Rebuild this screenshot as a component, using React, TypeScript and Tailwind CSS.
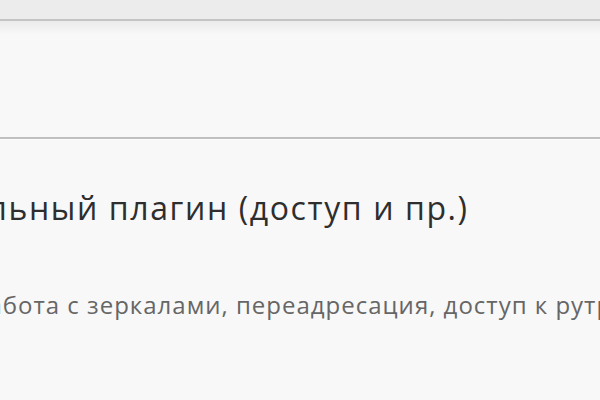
export default function App() {
  return (
    <div className="w-[600px] h-[400px] overflow-hidden bg-[#f8f8f8] font-['Open_Sans',sans-serif]">
      <div className="h-[21px] bg-[#ececec] border-b-2 border-[#c4c4c4]" />
      <div className="h-[118px] border-b-2 border-[#c0c0c0] bg-gradient-to-b from-[#ebebeb] via-[#f8f8f8] via-[12%] to-[#f8f8f8]" />
      <div className="h-px bg-[#fcfcfc]" />
      <div className="pt-[49px]">
        <h2 className="ml-[-198px] whitespace-nowrap text-[32px] leading-[38px] tracking-[1.6px] text-[#2e2e2e]">
          Дополнительный плагин (доступ и пр.)
        </h2>
        <p className="ml-[-27px] mt-[64px] whitespace-nowrap text-[24px] leading-[28px] tracking-[1px] text-[#666]">
          Работа с зеркалами, переадресация, доступ к рутрекеру
        </p>
      </div>
    </div>
  );
}
